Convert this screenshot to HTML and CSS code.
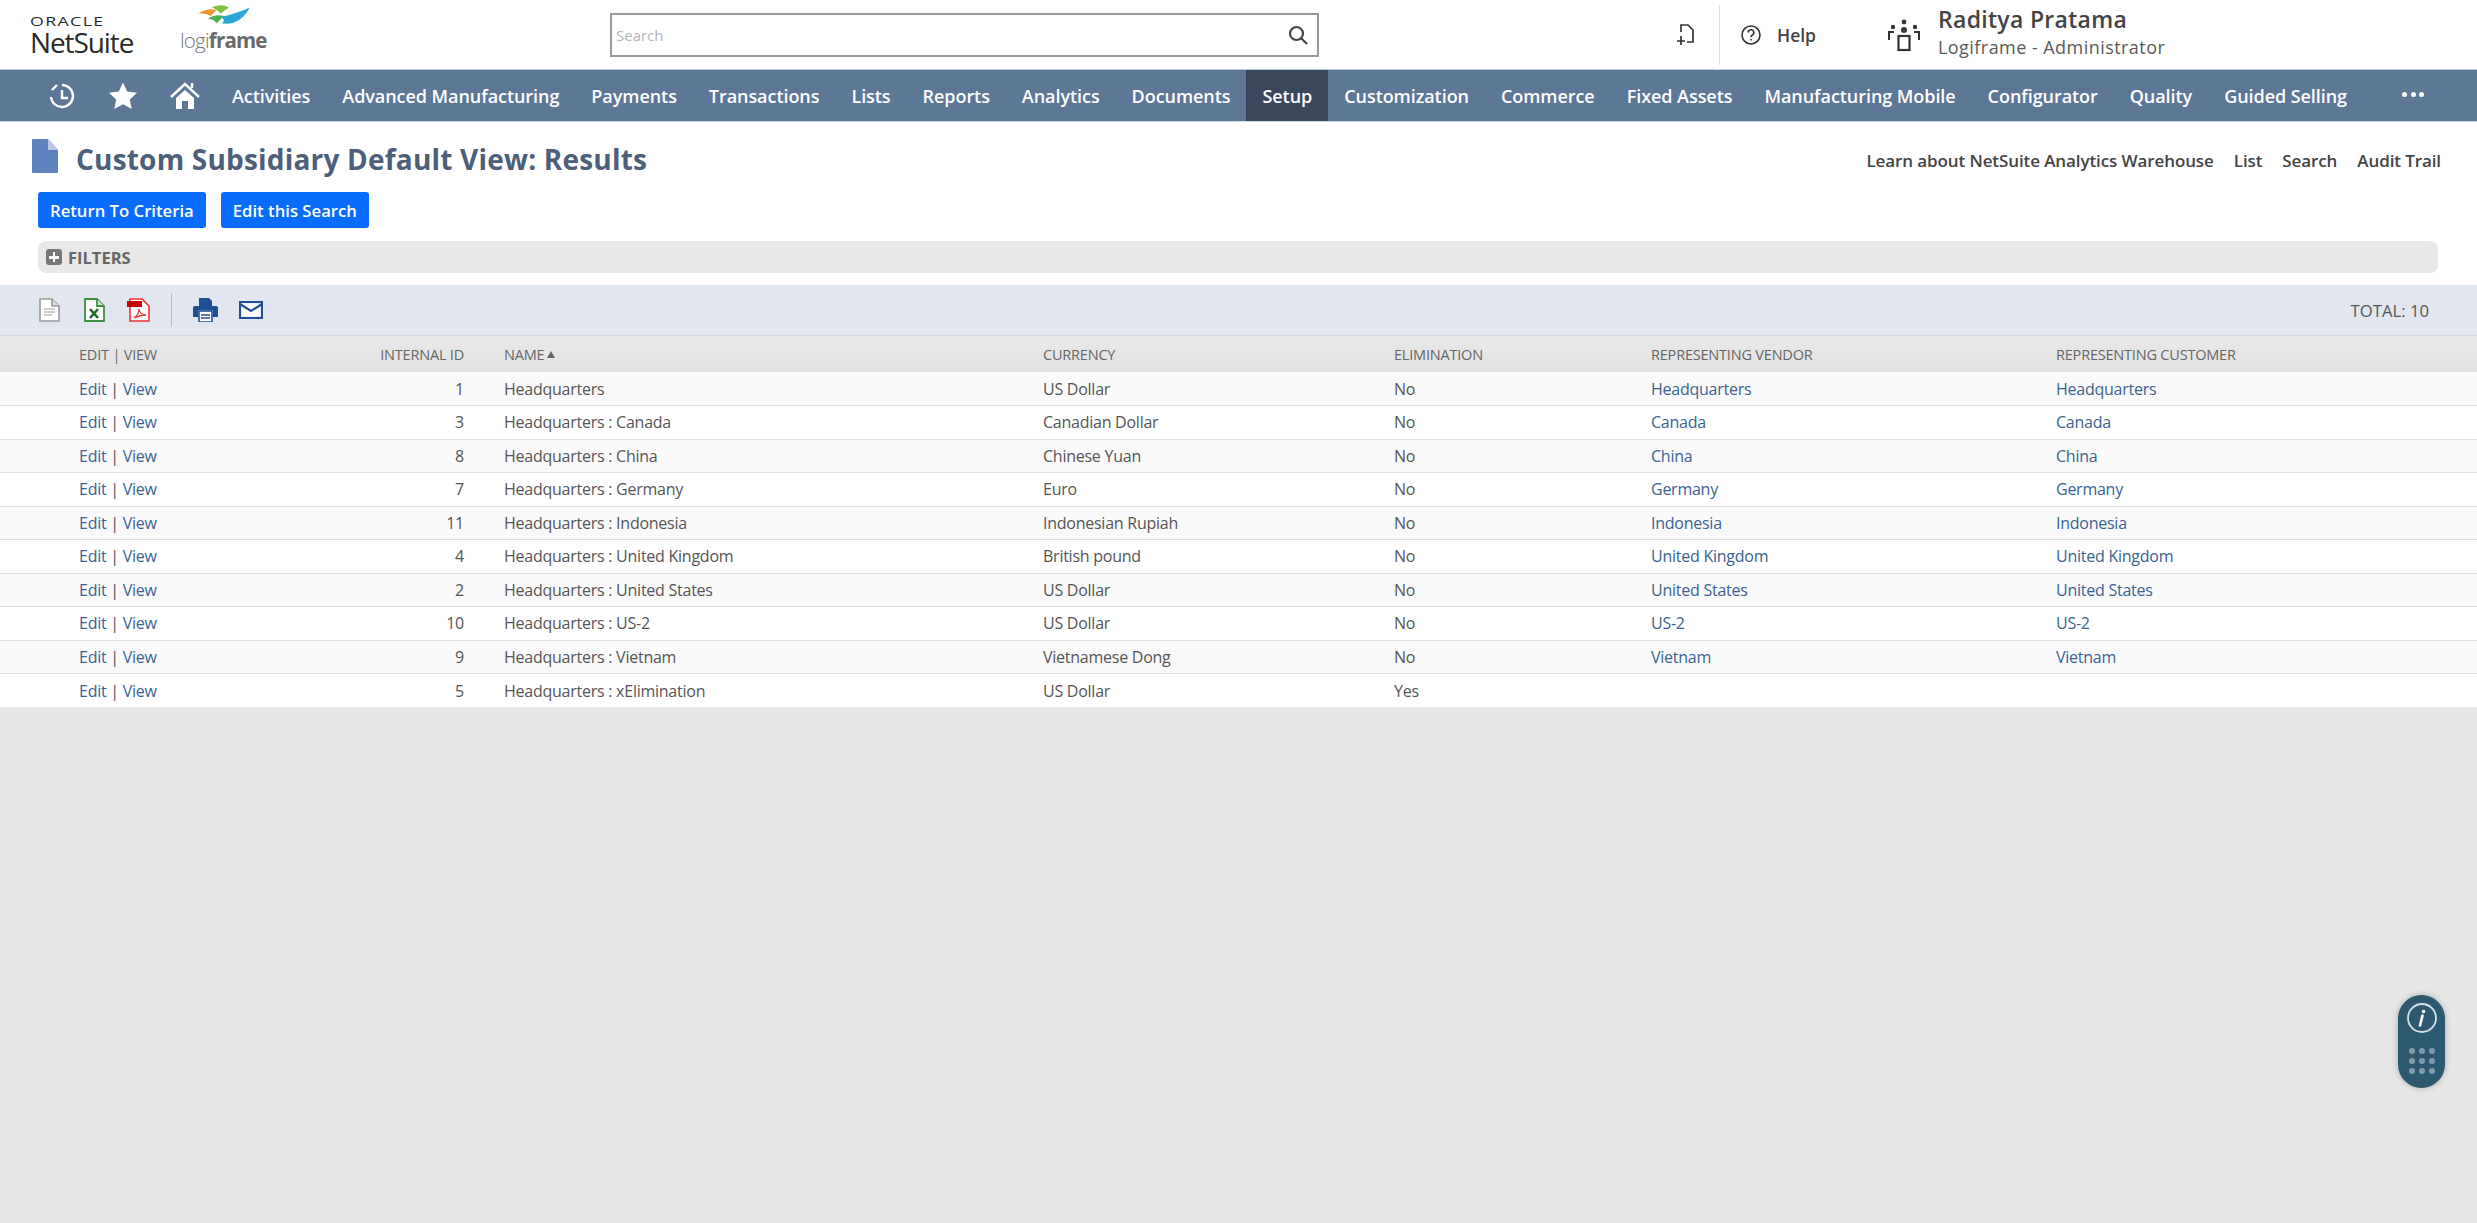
FILE: index.html
```html
<!DOCTYPE html>
<html lang="en">
<head>
<meta charset="utf-8">
<title>Custom Subsidiary Default View: Results</title>
<link rel="stylesheet" href="styles.css">
</head>
<body>
<header class="top">
  <div class="brand">
    <div class="oracle">ORACLE</div>
    <div class="netsuite">NetSuite</div>
  </div>
  <div class="client">
    <svg class="swoosh" width="56" height="22" viewBox="0 0 42 18">
      <path d="M0 7 C6 3 11 3 15 4 L10 9 C7 7 4 7 0 7Z" fill="#f0932b"/>
      <path d="M11 2 C17 -1 22 0 25 2 L18 7 C16 4 14 3 11 2Z" fill="#7cc242"/>
      <path d="M8 11 C13 8 17 8 21 9 L15 15 C13 12 11 12 8 11Z" fill="#4caf50"/>
      <path d="M18 10 C25 8 34 6 42 2 C38 10 30 17 19 15 C22 13 21 11 18 10Z" fill="#2aa7d8"/>
    </svg>
    <div class="logi">logi<b>frame</b></div>
  </div>
  <div class="search">
    <span class="search-ph">Search</span>
    <svg width="22" height="22" viewBox="0 0 22 22" fill="none" stroke="#444" stroke-width="2.2"><circle cx="9.5" cy="9.5" r="6.5"/><path d="M14 14l6 6"/></svg>
  </div>
  <svg class="newicon" width="22" height="24" viewBox="0 0 22 24" fill="none" stroke="#333" stroke-width="1.7"><path d="M6 9V2h7l5 5v12h-6"/><path d="M6 13v9M2 18h8"/></svg>
  <div class="vsep"></div>
  <svg class="helpicon" width="22" height="22" viewBox="0 0 22 22" fill="none" stroke="#333" stroke-width="1.6"><circle cx="11" cy="11" r="9"/><path d="M8.2 8.6a2.8 2.8 0 1 1 4.2 2.4c-1 .6-1.4 1.1-1.4 2.2"/><path d="M11 15v1.6"/></svg>
  <span class="help">Help</span>
  <svg class="usericon" width="34" height="34" viewBox="0 0 34 34" fill="#333"><circle cx="17" cy="4" r="2.4"/><circle cx="6" cy="9" r="2.2"/><circle cx="28" cy="9" r="2.2"/><circle cx="17" cy="12" r="3"/><path d="M2 22v-8h5M32 22v-8h-5" fill="none" stroke="#333" stroke-width="2"/><rect x="11.5" y="18" width="11" height="14" fill="none" stroke="#333" stroke-width="2.2"/></svg>
  <div class="user">
    <div class="user-name">Raditya Pratama</div>
    <div class="user-role">Logiframe - Administrator</div>
  </div>
</header>

<nav class="nav">
  <svg class="nav-icon" width="30" height="30" viewBox="0 0 30 30" fill="none" stroke="#fff" stroke-width="2.4"><path d="M15 4a11 11 0 1 1-11 12"/><path d="M5 9l5-5M15 9v8h6"/></svg>
  <svg class="nav-icon" width="30" height="30" viewBox="0 0 30 30" fill="#fff"><path d="M15 1.5l4.2 9 9.8 1.2-7.2 6.7 1.9 9.7L15 23.300l-8.700 4.800 1.900-9.700L1 11.700l9.800-1.200z"/></svg>
  <svg class="nav-icon" width="32" height="30" viewBox="0 0 32 30" fill="none" stroke="#fff" stroke-width="2.4"><path d="M2 16L16 3l14 13"/><path d="M23 7V2"/><path fill="#fff" stroke="none" d="M7 17l9-8 9 8v11H19v-8h-6v8H7z"/></svg>
  <a class="nav-item">Activities</a>
  <a class="nav-item">Advanced Manufacturing</a>
  <a class="nav-item">Payments</a>
  <a class="nav-item">Transactions</a>
  <a class="nav-item">Lists</a>
  <a class="nav-item">Reports</a>
  <a class="nav-item">Analytics</a>
  <a class="nav-item">Documents</a>
  <a class="nav-item active">Setup</a>
  <a class="nav-item">Customization</a>
  <a class="nav-item">Commerce</a>
  <a class="nav-item">Fixed Assets</a>
  <a class="nav-item">Manufacturing Mobile</a>
  <a class="nav-item">Configurator</a>
  <a class="nav-item">Quality</a>
  <a class="nav-item">Guided Selling</a>
  <span class="nav-more"><i></i><i></i><i></i></span>
</nav>

<main class="page">
  <div class="title-row">
    <svg class="title-icon" width="26" height="34" viewBox="0 0 26 34"><path d="M1 0h15l10 11v22a1 1 0 0 1-1 1H1a1 1 0 0 1-1-1V1a1 1 0 0 1 1-1z" fill="#5e82bd"/><path d="M16 0l10 11H16z" fill="#b9c9e3"/></svg>
    <h1 class="title">Custom Subsidiary Default View: Results</h1>
    <div class="top-links">
      <a>Learn about NetSuite Analytics Warehouse</a>
      <a>List</a>
      <a>Search</a>
      <a>Audit Trail</a>
    </div>
  </div>
  <div class="buttons">
    <button class="btn">Return To Criteria</button>
    <button class="btn">Edit this Search</button>
  </div>
  <div class="filters">
    <span class="plus"></span>
    <span class="filters-label">FILTERS</span>
  </div>
  <div class="toolbar">
    <svg class="tool" width="21" height="24" viewBox="0 0 21 24" fill="#fff" stroke="#9a9a9a" stroke-width="1.6"><path d="M1 1h12l7 7v15H1z"/><path d="M13 1v7h7" fill="#ddd"/><path d="M5 11h11M5 14h11M5 17h8" stroke-width="1"/></svg>
    <svg class="tool" width="21" height="24" viewBox="0 0 21 24" fill="#fff" stroke="#3f9142" stroke-width="1.8"><path d="M1 1h12l7 7v15H1z"/><path d="M13 1v7h7" fill="#cfe6cf"/><path d="M6 11l8 9M14 11l-8 9" stroke="#1d6b22" stroke-width="2.6"/></svg>
    <svg class="tool pdf" width="23" height="24" viewBox="0 0 23 24" fill="#fff" stroke="#e33" stroke-width="1.6"><path d="M3 1h12l7 7v15H3z"/><rect x="0" y="3" width="15" height="6" fill="#c40000" stroke="none"/><path d="M7 20c3-2 5-6 5-9 0 3 3 6 7 6-4 0-8 1-12 3z" stroke-width="1.300"/></svg>
    <div class="tool-sep"></div>
    <svg class="tool print" width="25" height="24" viewBox="0 0 25 24" fill="#1f4f96"><path d="M6 0h10l3 3v5H6z"/><path d="M2 8h21a2 2 0 0 1 2 2v9h-5v-7H5v7H0v-9a2 2 0 0 1 2-2z"/><rect x="6" y="13" width="13" height="11" fill="#fff" stroke="#1f4f96" stroke-width="1.6"/><path d="M8 17h9M8 20h9" stroke="#1f4f96" stroke-width="1.300"/></svg>
    <svg class="tool mail" width="24" height="18" viewBox="0 0 24 18" fill="#fff" stroke="#1f4f96" stroke-width="2.2"><rect x="1" y="1" width="22" height="16"/><path d="M1 3l11 7 11-7" fill="none"/></svg>
    <span class="total">TOTAL: 10</span>
  </div>
  <table class="grid">
    <colgroup>
      <col class="c-edit"><col class="c-id"><col class="c-name"><col class="c-cur"><col class="c-el"><col class="c-ven"><col class="c-cus">
    </colgroup>
    <thead>
      <tr><th>EDIT | VIEW</th><th class="num">INTERNAL ID</th><th>NAME<span class="sort"></span></th><th>CURRENCY</th><th>ELIMINATION</th><th>REPRESENTING VENDOR</th><th>REPRESENTING CUSTOMER</th></tr>
    </thead>
    <tbody>
      <tr><td><a>Edit</a> | <a>View</a></td><td class="num">1</td><td>Headquarters</td><td>US Dollar</td><td>No</td><td><a>Headquarters</a></td><td><a>Headquarters</a></td></tr>
      <tr><td><a>Edit</a> | <a>View</a></td><td class="num">3</td><td>Headquarters : Canada</td><td>Canadian Dollar</td><td>No</td><td><a>Canada</a></td><td><a>Canada</a></td></tr>
      <tr><td><a>Edit</a> | <a>View</a></td><td class="num">8</td><td>Headquarters : China</td><td>Chinese Yuan</td><td>No</td><td><a>China</a></td><td><a>China</a></td></tr>
      <tr><td><a>Edit</a> | <a>View</a></td><td class="num">7</td><td>Headquarters : Germany</td><td>Euro</td><td>No</td><td><a>Germany</a></td><td><a>Germany</a></td></tr>
      <tr><td><a>Edit</a> | <a>View</a></td><td class="num">11</td><td>Headquarters : Indonesia</td><td>Indonesian Rupiah</td><td>No</td><td><a>Indonesia</a></td><td><a>Indonesia</a></td></tr>
      <tr><td><a>Edit</a> | <a>View</a></td><td class="num">4</td><td>Headquarters : United Kingdom</td><td>British pound</td><td>No</td><td><a>United Kingdom</a></td><td><a>United Kingdom</a></td></tr>
      <tr><td><a>Edit</a> | <a>View</a></td><td class="num">2</td><td>Headquarters : United States</td><td>US Dollar</td><td>No</td><td><a>United States</a></td><td><a>United States</a></td></tr>
      <tr><td><a>Edit</a> | <a>View</a></td><td class="num">10</td><td>Headquarters : US-2</td><td>US Dollar</td><td>No</td><td><a>US-2</a></td><td><a>US-2</a></td></tr>
      <tr><td><a>Edit</a> | <a>View</a></td><td class="num">9</td><td>Headquarters : Vietnam</td><td>Vietnamese Dong</td><td>No</td><td><a>Vietnam</a></td><td><a>Vietnam</a></td></tr>
      <tr><td><a>Edit</a> | <a>View</a></td><td class="num">5</td><td>Headquarters : xElimination</td><td>US Dollar</td><td>Yes</td><td></td><td></td></tr>
    </tbody>
  </table>
</main>

<aside class="widget">
  <svg width="32" height="32" viewBox="0 0 32 32" fill="none"><circle cx="16" cy="16" r="14" stroke="#d5e2ea" stroke-width="1.800"/><circle cx="17.500" cy="9.500" r="1.800" fill="#fff"/><path d="M16.500 13.500L14 23.500" stroke="#fff" stroke-width="2.600" stroke-linecap="round"/></svg>
  <div class="dots"><i></i><i></i><i></i><i></i><i></i><i></i><i></i><i></i><i></i></div>
</aside>
</body>
</html>
```
FILE: styles.css
```css
* { box-sizing: border-box; }
html, body { margin: 0; height: 100%; }
body {
  background: #e6e6e6;
  font-family: "Open Sans", "Liberation Sans", sans-serif;
  color: #4a4a4a;
  overflow: hidden;
  position: relative;
}
a { color: inherit; }

.top {
  height: 69px;
  background: #fff;
  display: flex;
  align-items: center;
}
.brand { margin-left: 30px; width: 150px; color: #2b2b2b; padding-top: 2px; }
.oracle { font-size: 13.500px; line-height: 14px; letter-spacing: 1px; transform: scaleX(1.32); transform-origin: left center; }
.netsuite { font-size: 28px; line-height: 29px; letter-spacing: -1.100px; }
.client { width: 100px; position: relative; padding-top: 10px; }
.swoosh { position: absolute; left: 16px; top: -13px; }
.logi { font-size: 20.500px; line-height: 24px; color: #777; letter-spacing: -.8px; font-weight: 300; }
.logi b { font-weight: 700; color: #6a6a6a; }
.search {
  margin-left: 330px;
  width: 709px;
  height: 44px;
  border: 2px solid #999;
  display: flex;
  align-items: center;
  justify-content: space-between;
  padding: 0 8px 0 4px;
}
.search-ph { font-size: 15px; color: #b5b5b5; }
.newicon { margin-left: 356px; }
.vsep { width: 1px; height: 60px; background: #ddd; margin-left: 22px; }
.helpicon { margin-left: 20px; }
.help { font-size: 17.500px; font-weight: 600; color: #444; margin-left: 15px; width: 110px; }
.usericon { margin-left: 0; }
.user { margin-left: 17px; padding-bottom: 5px; }
.user-name { font-size: 23px; line-height: 26px; font-weight: 600; color: #444; letter-spacing: .3px; }
.user-role { font-size: 18px; line-height: 24px; color: #5a5a5a; letter-spacing: .45px; margin-top: 3px; }

.nav {
  height: 53px;
  background: #5d7797;
  border-top: 1px solid #b7cedb;
  border-bottom: 1px solid #c9dbe6;
  display: flex;
  align-items: stretch;
  padding-left: 47px;
}
.nav-icon { align-self: center; margin-right: 31px; flex: none; }
.nav-item {
  display: flex;
  align-items: center;
  padding: 0 16px;
  font-size: 18px;
  font-weight: 600;
  color: #fff;
  white-space: nowrap;
  letter-spacing: -.06px;
}
.nav-icon + .nav-item { margin-left: -16px; }
.nav-item.active { background: #3a475d; }
.nav-more { display: flex; gap: 3.500px; align-items: center; margin-left: 39px; padding-bottom: 2px; }
.nav-more i { width: 5px; height: 5px; border-radius: 50%; background: #fff; }

.page { background: #fff; }
.title-row {
  display: flex;
  align-items: center;
  height: 70px;
  padding: 3px 36px 0 32px;
}
.title-icon { flex: none; margin-top: -5px; }
.title {
  margin: 0 0 0 18px;
  font-size: 28px;
  font-weight: 700;
  color: #4d5f79;
  flex: 1;
  letter-spacing: .2px;
}
.top-links { display: flex; gap: 20px; font-size: 17px; font-weight: 600; color: #444; padding-top: 4px; letter-spacing: -.1px; }
.buttons { display: flex; gap: 15px; padding-left: 38px; height: 36px; }
.btn {
  border: 0;
  border-radius: 3px;
  background: #0a6cfb;
  color: #fff;
  font-family: inherit;
  font-size: 16.700px;
  font-weight: 600;
  padding: 0 12px;
  height: 36px;
}
.filters {
  margin: 13px 39px 0 38px;
  height: 32px;
  background: #e8e8e8;
  border-radius: 8px;
  display: flex;
  align-items: center;
  padding-left: 8px;
}
.plus {
  width: 16px; height: 16px; border-radius: 3px; background: #777; position: relative;
}
.plus::before, .plus::after { content: ""; position: absolute; background: #fff; }
.plus::before { left: 3px; right: 3px; top: 7px; height: 2.500px; }
.plus::after { top: 3px; bottom: 3px; left: 6.800px; width: 2.500px; }
.filters-label { margin-left: 6px; font-size: 16.500px; font-weight: 700; color: #666; }
.toolbar {
  margin-top: 12px;
  height: 51px;
  background: #e1e6ef;
  border-bottom: 1px solid #d4d8de;
  display: flex;
  align-items: center;
  padding-left: 39px;
}
.tool { flex: none; }
.tool + .tool { margin-left: 24px; }
.tool.pdf { margin-left: 22px; }
.tool-sep { width: 1px; height: 34px; background: #b6bcc6; margin: 0 21px 0 21px; }
.tool-sep + .tool { margin-left: 0; }
.tool.mail { margin-left: 21px; }
.total { margin-left: auto; margin-right: 48px; font-size: 16.700px; color: #555; }

.grid { width: 100%; border-collapse: collapse; table-layout: fixed; }
.c-edit { width: 320px; }
.c-id { width: 184px; }
.c-name { width: 539px; }
.c-cur { width: 351px; }
.c-el { width: 257px; }
.c-ven { width: 405px; }
th {
  height: 36px;
  background: linear-gradient(#e9e9e9, #e2e2e2);
  font-size: 14.500px;
  font-weight: 400;
  color: #666;
  text-align: left;
  padding: 0;
  white-space: nowrap;
  letter-spacing: -.2px;
}
th:first-child, td:first-child { padding-left: 79px; }
td {
  height: 33.500px;
  padding: 0;
  font-size: 16px;
  color: #555;
  border-bottom: 1px solid #dfdfdf;
  white-space: nowrap;
  letter-spacing: -.25px;
}
th.num, td.num { text-align: right; padding-right: 40px; }
tr:last-child td { border-bottom: 0; }
tbody tr:nth-child(odd) td { background: #fafafa; }
tbody tr:nth-child(even) td, tbody tr:last-child td { background: #fff; }
td a { color: #3a6393; }
.sort {
  display: inline-block;
  margin-left: 3px;
  vertical-align: 2px;
  border-left: 4px solid transparent;
  border-right: 4px solid transparent;
  border-bottom: 7px solid #666;
}

.widget {
  position: absolute;
  left: 2398px;
  top: 995px;
  width: 47px;
  height: 93px;
  border-radius: 24px;
  background: #2c5970;
  box-shadow: 0 0 6px rgba(0,0,0,.25);
  display: flex;
  flex-direction: column;
  align-items: center;
  padding-top: 7px;
}
.dots { display: grid; grid-template-columns: repeat(3, 6px); gap: 4px; margin-top: 14px; }
.dots i { width: 6px; height: 6px; border-radius: 50%; background: #7f9cad; }
```
